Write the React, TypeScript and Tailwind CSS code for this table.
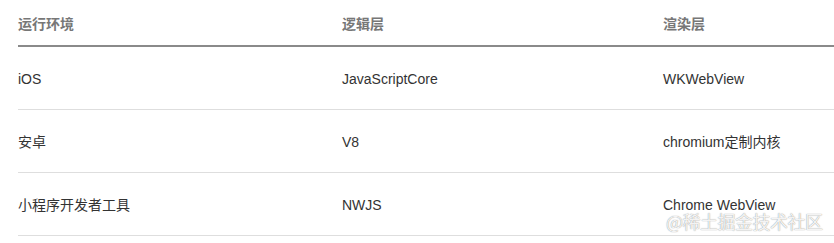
import React from 'react';

const rows = [
  ['iOS', 'JavaScriptCore', 'WKWebView'],
  ['安卓', 'V8', 'chromium定制内核'],
  ['小程序开发者工具', 'NWJS', 'Chrome WebView'],
];

const cols = 'grid grid-cols-[324px_321px_1fr]';

const App: React.FC = () => {
  return (
    <div className="relative w-[834px] h-[243px] overflow-hidden bg-white pl-[18px] font-['Liberation_Sans','Noto_Sans_CJK_SC',sans-serif] text-[14px]">
      <div className={`${cols} h-[47px] items-center border-b-2 border-[#8a8a8a] pt-[3px] font-bold text-[#777]`}>
        <div>运行环境</div>
        <div>逻辑层</div>
        <div>渲染层</div>
      </div>
      {rows.map((row, i) => (
        <div key={i} className={`${cols} h-[63px] items-center border-b border-[#dedede] pt-[3px] text-[#333]`}>
          {row.map((cell, j) => (
            <div key={j}>{cell}</div>
          ))}
        </div>
      ))}
      <div className="absolute left-[666px] top-[209px] whitespace-nowrap text-[18px] leading-[24px] tracking-[-0.5px] text-white/90 [text-shadow:0_0_1px_rgba(0,0,0,0.55)] font-['Noto_Sans_CJK_SC',sans-serif]">
        @稀土掘金技术社区
      </div>
    </div>
  );
};

export default App;
